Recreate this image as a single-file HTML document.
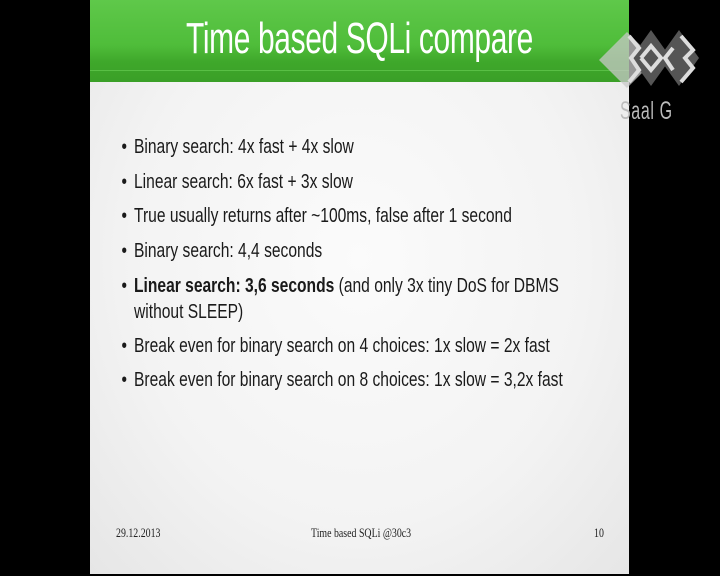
<!DOCTYPE html>
<html><head><meta charset="utf-8"><style>
body{margin:0;width:720px;height:576px;background:#000;position:relative;overflow:hidden;font-family:"Liberation Sans",sans-serif}
.slide{position:absolute;left:90px;top:0;width:539px;height:574px;background:radial-gradient(ellipse at 50% 45%,#fbfbfb 0%,#f3f3f3 60%,#e6e6e6 100%)}
.hdr{position:absolute;left:0;top:0;width:539px;height:82px;background:linear-gradient(#5fc84a 0%,#4fbd3a 55%,#3fa82b 75%,#3a9f27 100%)}
.hdr:after{content:"";position:absolute;left:0;right:0;top:70px;height:1px;background:#6dd258;opacity:.6}
.title{position:absolute;left:96px;top:14px;color:#fff;font-size:44px;white-space:nowrap;transform:scaleX(0.68);transform-origin:left top;letter-spacing:-0.5px}
.b{position:absolute;left:44px;color:#1a1a1a;font-size:20px;white-space:nowrap;transform:scaleX(0.78);transform-origin:left top}
.b:before{content:"•";position:absolute;left:-16px}
.c{position:absolute;left:44px;color:#1a1a1a;font-size:20px;white-space:nowrap;transform:scaleX(0.78);transform-origin:left top}
.f{position:absolute;top:525px;font-family:"Liberation Serif",serif;font-size:13px;color:#222;transform:scaleX(0.76);transform-origin:left top;white-space:nowrap}
.logo{position:absolute;left:599px;top:27px}
.saal{position:absolute;left:620px;top:97px;color:#bbb;font-size:25px;transform:scaleX(0.64);transform-origin:left top;letter-spacing:1px}
</style></head><body>
<div class="slide">
<div class="hdr"><div class="title">Time based SQLi compare</div></div>
<div class="b" style="top:136px">Binary search: 4x fast + 4x slow</div>
<div class="b" style="top:171px">Linear search: 6x fast + 3x slow</div>
<div class="b" style="top:205px">True usually returns after ~100ms, false after 1 second</div>
<div class="b" style="top:240px">Binary search: 4,4 seconds</div>
<div class="b" style="top:275px"><b>Linear search: 3,6 seconds</b> (and only 3x tiny DoS for DBMS</div>
<div class="c" style="top:301px">without SLEEP)</div>
<div class="b" style="top:335px">Break even for binary search on 4 choices: 1x slow = 2x fast</div>
<div class="b" style="top:369px">Break even for binary search on 8 choices: 1x slow = 3,2x fast</div>
<div class="f" style="left:26px">29.12.2013</div>
<div class="f" style="left:221px">Time based SQLi @30c3</div>
<div class="f" style="left:504px">10</div>
</div>
<svg class="logo" width="100" height="64" viewBox="0 0 100 62">
<polygon points="0,32 28,4 56,32 28,60" fill="#c8c8c8" opacity=".75"/>
<polygon points="32,30 52,2 72,30 52,58" fill="#555"/>
<polygon points="60,30 80,2 100,30 80,58" fill="#555"/>
<polyline points="42,30 52,18 62,30 52,42 42,30" fill="none" stroke="#ddd" stroke-width="4"/>
<polyline points="30,8 40,20 32,30 40,42 30,54" fill="none" stroke="#ddd" stroke-width="4"/>
<polyline points="74,20 66,30 74,42" fill="none" stroke="#ddd" stroke-width="4"/>
<polyline points="82,8 94,22 86,30 94,40 82,54" fill="none" stroke="#ddd" stroke-width="4"/>
</svg>
<div class="saal">Saal G</div>
</body></html>
